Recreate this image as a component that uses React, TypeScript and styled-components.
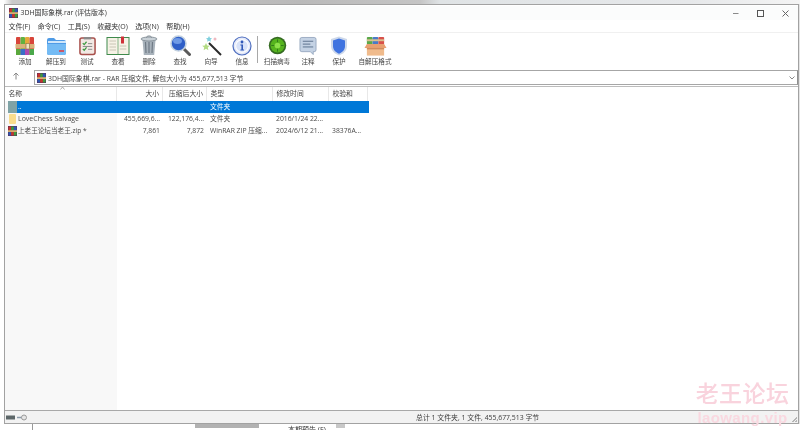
import React from "react";
import styled, { createGlobalStyle } from "styled-components";

const Global = createGlobalStyle`
  html, body { margin: 0; padding: 0; background: #fff; width: 800px; height: 430px; overflow: hidden; }
  body { font-family: "Open Sans", "Noto Sans CJK SC", sans-serif; color: #3a3a3a; }
  * { box-sizing: border-box; }
`;

const Page = styled.div`
  position: relative; width: 800px; height: 430px; display: flex; flex-direction: column;
  background: #fff; overflow: hidden;
`;
const TopStrip = styled.div`
  height: 4px; flex: none;
  background: linear-gradient(to right, #fdfdfd 0, #fdfdfd 4px, #c9c9c9 12px, #b9b9b9 300px, #c5c5c5 420px, #dfe3e5 440px, #e6e8ea 690px, #f4f4f4 800px);
`;
const Middle = styled.div`
  flex: 1; display: flex; padding: 0 1px 0 4px; background: linear-gradient(to right, #fff 796px, #e4e4e4 796px);
  min-height: 0;
`;
const Win = styled.div`
  flex: 1; display: flex; flex-direction: column; background: #fff; border: 1px solid #a2a2a2; min-width: 0;
  filter: blur(0.35px);
`;
const TitleBar = styled.div`
  height: 14px; flex: none; display: flex; align-items: center; padding-left: 4px; margin-top: 1px;
  background: #fbfcfc; font-size: 6.9px; gap: 2.5px; color: #333;
`;
const TitleText = styled.span` flex: 1; line-height: 14px; white-space: nowrap; `;
const Controls = styled.div` display: flex; margin-right: 0; `;
const Control = styled.div` width: 25px; height: 14px; display: flex; align-items: center; justify-content: center; `;
const MenuBar = styled.div`
  height: 13px; flex: none; display: flex; gap: 7.5px; padding-left: 3.5px; align-items: center; font-size: 7px; color: #333;
  border-bottom: 1px solid #f0f0f0;
`;
const MenuItem = styled.span` white-space: nowrap; line-height: 13px; `;
const Toolbar = styled.div`
  height: 34px; flex: none; display: flex; align-items: flex-start; padding-left: 4.5px;
`;
const ToolButton = styled.div<{ $wide?: boolean }>`
  width: ${(p) => (p.$wide ? "41px" : "31px")}; flex: none; display: flex; flex-direction: column; align-items: center;
  font-size: 6.6px; color: #444; white-space: nowrap; padding-top: 2px;
`;
const ToolLabel = styled.span` line-height: 9px; margin-top: 1px; `;
const ToolSep = styled.div` width: 1px; height: 27px; margin: 3px 3.5px 0 -0.5px; background: #a8a8a8; flex: none; `;
const AddressRow = styled.div`
  height: 20px; flex: none; display: flex; align-items: flex-end; padding-bottom: 1px; background: #fff; border-bottom: 1px solid #bcbcbc;
`;
const UpArrow = styled.div` width: 29px; height: 15px; display: flex; align-items: center; padding: 0 0 3px 7px; flex: none; `;
const AddressBox = styled.div`
  flex: 1; height: 15px; border: 1px solid #a6a6a6; border-right-color: #8f8f8f; display: flex; align-items: center; gap: 1px; padding: 0 2px;
  font-size: 6.9px; color: #444; white-space: nowrap;
`;
const AddressText = styled.span` flex: 1; margin-left: 1px; `;
const ListArea = styled.div`
  flex: 1; min-height: 0; display: flex; flex-direction: column;
  background: linear-gradient(to right, #f8f8f8 112.5px, #fff 112.5px);
`;
const COLS = "112px 46px 44px 66px 56px 39px";
const Header = styled.div`
  display: grid; grid-template-columns: ${COLS}; height: 14px; width: 363px; flex: none; font-size: 6.8px; color: #444;
  background: #fff; position: relative;
`;
const HeadCell = styled.div<{ $right?: boolean }>`
  line-height: 14px; border-right: 1px solid #e8e8e8; white-space: nowrap;
  padding: ${(p) => (p.$right ? "0 3px 0 0" : "0 0 0 3.5px")}; text-align: ${(p) => (p.$right ? "right" : "left")};
`;
const SortMark = styled.span`
  position: absolute; left: 55px; top: -1px; width: 5px; height: 4px; display: block; line-height: 0;
`;
const Row = styled.div<{ $selected?: boolean }>`
  display: grid; grid-template-columns: ${COLS}; height: 11.8px; width: 363.500px; font-size: 6.8px; flex: none;
  color: ${(p) => (p.$selected ? "#fff" : "#4a4a4a")};
  background: ${(p) => (p.$selected ? "linear-gradient(to right, transparent 12px, #0078d7 12px)" : "transparent")};
`;
const NameCell = styled.div` display: flex; align-items: center; gap: 1px; padding-left: 3px; white-space: nowrap; line-height: 12px; font-size: 7px; `;
const TightName = styled.span` font-size: 6.6px; `;
const Cell = styled.div<{ $right?: boolean }>`
  line-height: 12px; white-space: nowrap; overflow: hidden;
  padding: ${(p) => (p.$right ? "0 3px 0 0" : "0 0 0 3px")}; text-align: ${(p) => (p.$right ? "right" : "left")};
`;
const StatusBar = styled.div`
  height: 13px; flex: none; display: flex; align-items: center; background: #f2f2f2; border-top: 1px solid #a8a8a8;
  font-size: 6.9px; color: #3c3c3c; padding-left: 1px; position: relative;
`;
const StatusIcons = styled.div` width: 410px; display: flex; gap: 1px; align-items: center; flex: none; `;
const Grip = styled.div`
  position: absolute; right: 1px; bottom: 1px; width: 5px; height: 5px;
  background: linear-gradient(135deg, transparent 50%, #b5b5b5 50%, #b5b5b5 62%, transparent 62%, transparent 75%, #b5b5b5 75%);
`;
const BottomStrip = styled.div`
  height: 6px; flex: none; display: flex; font-size: 7px; color: #333; overflow: hidden; filter: blur(0.35px);
`;
const LeftPane = styled.div` width: 33px; flex: none; border-right: 1px solid #9a9a9a; `;
const Bump = styled.div` width: 64px; height: 4px; margin-left: 162px; background: #b2b2b2; flex: none; `;
const CutText = styled.span` margin-left: 29px; line-height: 12px; white-space: nowrap; `;
const Bump2 = styled.div` width: 9px; height: 4px; margin-left: 10px; background: #c8c8c8; flex: none; `;
const Watermark = styled.div`
  position: absolute; left: 695px; top: 380px; width: 95px; color: #f9d3dd; text-align: center; filter: blur(0.3px); pointer-events: none;
`;
const WmCn = styled.div` font-size: 23px; font-weight: 500; line-height: 27px; letter-spacing: 0.4px; white-space: nowrap; `;
const WmEn = styled.div` font-size: 15px; font-weight: 700; line-height: 14px; letter-spacing: 0.4px; margin-top: 4px; color: #f9d8e0; font-family: "Liberation Sans", sans-serif; white-space: nowrap; `;

const RarSmall = () => (
  <svg width="9" height="10" viewBox="0 0 10 10" preserveAspectRatio="none" style={{ flex: "none" }}>
    <rect x="0" y="0" width="10" height="10" fill="#5a2a5a" />
    <rect x="0.5" y="0.5" width="3" height="4" fill="#c8342c" />
    <rect x="3.5" y="0.5" width="3" height="4" fill="#3f9a3c" />
    <rect x="6.5" y="0.5" width="3" height="4" fill="#2d58b0" />
    <rect x="0.5" y="6" width="3" height="3.5" fill="#2d58b0" />
    <rect x="3.5" y="6" width="3" height="3.5" fill="#c8342c" />
    <rect x="6.5" y="6" width="3" height="3.5" fill="#3f9a3c" />
    <rect x="0" y="4.2" width="10" height="1.8" fill="#d8b070" />
  </svg>
);
const Books = () => (
  <svg width="20" height="20" viewBox="0 0 20 20">
    <rect x="1" y="1" width="4.5" height="18" rx="1" fill="#d8453a" />
    <rect x="5.5" y="1" width="4.5" height="18" rx="1" fill="#62b13f" />
    <rect x="10" y="1" width="4.5" height="18" rx="1" fill="#e4a83a" />
    <rect x="14.5" y="1" width="4.5" height="18" rx="1" fill="#d8453a" />
    <rect x="1" y="13" width="4.5" height="6" fill="#5aa83c" />
    <rect x="5.5" y="13" width="4.5" height="6" fill="#3a6fc8" />
    <rect x="10" y="13" width="4.5" height="6" fill="#b04ab0" />
    <rect x="14.5" y="13" width="4.5" height="6" fill="#4aa84a" />
    <rect x="0.5" y="8" width="19" height="4.5" fill="#d9b27a" />
    <rect x="11" y="7.5" width="3.5" height="5.5" fill="#f2e4c0" stroke="#8a6a3a" strokeWidth=".6" />
  </svg>
);
const FolderBlue = () => (
  <svg width="21" height="20" viewBox="0 0 21 20">
    <path d="M1 4a2 2 0 0 1 2-2h5l2 2h8a2 2 0 0 1 2 2v11a2 2 0 0 1-2 2H3a2 2 0 0 1-2-2z" fill="#4f9be6" />
    <path d="M1 8h19v9a2 2 0 0 1-2 2H3a2 2 0 0 1-2-2z" fill="#74bbf4" />
    <path d="M2 5h18v2H2z" fill="#cfe6fa" />
    <rect x="13" y="14" width="5" height="2" fill="#c9586a" />
  </svg>
);
const Test = () => (
  <svg width="17" height="20" viewBox="0 0 18 20">
    <rect x="1" y="1.5" width="16" height="17.5" rx="2" fill="#f2e9e4" stroke="#a8504c" strokeWidth="1.6" />
    <rect x="5" y="0.5" width="8" height="2.5" fill="#8a8a8a" />
    <path d="M4 7l1.5 1.5L8 5.5M4 13l1.5 1.5L8 11.5" fill="none" stroke="#3c9a40" strokeWidth="1.3" />
    <path d="M9.5 7.5h4.5M9.5 13.5h4.5M4 10.5h10" stroke="#888" strokeWidth="1" />
  </svg>
);
const BookOpen = () => (
  <svg width="24" height="20" viewBox="0 0 24 20">
    <rect x="0.5" y="1" width="23" height="18" fill="#3f8a4c" />
    <rect x="1.500" y="2" width="10.200" height="16" fill="#f6f2e6" />
    <rect x="12.300" y="2" width="10.200" height="16" fill="#f6f2e6" />
    <rect x="15" y="0.5" width="3" height="7" fill="#cf3038" />
    <path d="M3.500 5h6.500M3.500 8h6.500M3.500 11h6.500M3.500 14h6.500M13.800 10h6.500M13.800 13h6.500" stroke="#c4c0b0" strokeWidth=".9" />
  </svg>
);
const Trash = () => (
  <svg width="18" height="21" viewBox="0 0 18 21">
    <path d="M2.500 5h13l-1.300 15H3.800z" fill="#a8b2bb" />
    <path d="M5.500 7l.5 11M9 7v11M12.500 7l-.5 11" stroke="#6f7a85" strokeWidth="1.200" />
    <ellipse cx="9" cy="4" rx="8" ry="2" fill="#c8d0d6" stroke="#7a858e" strokeWidth=".8" />
    <path d="M6.500 2.500c0-2 5-2 5 0" fill="none" stroke="#7a858e" />
  </svg>
);
const Find = () => (
  <svg width="21" height="21" viewBox="0 0 21 21">
    <path d="M13 13l6.500 6.500" stroke="#5a5a5a" strokeWidth="3" strokeLinecap="round" />
    <circle cx="8.500" cy="8.500" r="7.500" fill="#2f5fc8" stroke="#c4d2e0" strokeWidth="1.600" />
    <ellipse cx="7.500" cy="6" rx="4.500" ry="3" fill="#6f9ae6" />
  </svg>
);
const Wizard = () => (
  <svg width="21" height="21" viewBox="0 0 21 21">
    <path d="M8 8l12 12" stroke="#2a2a2a" strokeWidth="2" />
    <path d="M5 8l1.200 2.500 2.600.3-2 1.800.6 2.600L5 13.800l-2.400 1.400.6-2.600-2-1.800 2.600-.3z" fill="#b4dc84" />
    <path d="M8 1l1 2 2 .3-1.500 1.400.4 2L8 5.800l-1.900.9.4-2L5 3.300 7 3z" fill="#7fd0de" />
    <circle cx="14" cy="4" r="1.500" fill="#eeb8c0" />
  </svg>
);
const Info = () => (
  <svg width="20" height="20" viewBox="0 0 20 20">
    <circle cx="10" cy="10" r="9" fill="#e4e9f8" stroke="#4f6fc0" strokeWidth="1.200" />
    <circle cx="10" cy="10" r="6.800" fill="#fff" />
    <circle cx="10" cy="10" r="5.800" fill="#d8e2f8" />
    <circle cx="10" cy="6" r="1.400" fill="#3058b8" />
    <path d="M8.400 8.500H11v5h1v1H8.400v-1h1v-4h-1z" fill="#3058b8" />
  </svg>
);
const Scan = () => (
  <svg width="19" height="19" viewBox="0 0 20 20">
    <circle cx="10" cy="10" r="9.200" fill="#356b22" />
    <circle cx="10" cy="10" r="7.400" fill="#56b41e" />
    <circle cx="10" cy="10" r="3" fill="#8ce04a" />
    <path d="M10 3.500v3M10 13.500v3M3.500 10h3M13.500 10h3" stroke="#2f7a1a" strokeWidth="1" />
  </svg>
);
const Note = () => (
  <svg width="18" height="20" viewBox="0 0 19 20">
    <path d="M3 1h13a2 2 0 0 1 2 2v11a2 2 0 0 1-2 2h-1v3l-3-3H3a2 2 0 0 1-2-2V3a2 2 0 0 1 2-2z" fill="#c4d2e4" stroke="#8a9cb6" strokeWidth=".8" />
    <path d="M4 5h11M4 8h8M4 11h11" stroke="#5a6f8c" strokeWidth="1" />
  </svg>
);
const Shield = () => (
  <svg width="18" height="20" viewBox="0 0 18 20">
    <path d="M9 0.500l8 2.500v7c0 5-4 8-8 9.500-4-1.500-8-4.500-8-9.500V3z" fill="#cdd8ea" />
    <path d="M9 2.500l6 2v5.500c0 4-3 6.500-6 7.800-3-1.300-6-3.800-6-7.800V4.500z" fill="#3f73e0" />
  </svg>
);
const Box = () => (
  <svg width="23" height="20" viewBox="0 0 24 20">
    <rect x="3" y="0.500" width="6" height="8" rx="1" fill="#5aa84a" />
    <rect x="9" y="0.500" width="6" height="8" rx="1" fill="#4a7ac8" />
    <rect x="15" y="0.500" width="6" height="8" rx="1" fill="#d8504a" />
    <rect x="3" y="3" width="18" height="2" fill="#d8c090" />
    <path d="M3 8h18l2.500 4H.5z" fill="#e8a070" />
    <rect x="3" y="12" width="18" height="8" fill="#f0bb8c" />
    <rect x="3" y="12" width="18" height="1.500" fill="#d08a5c" />
  </svg>
);

const tools: [string, React.ReactNode][] = [
  ["添加", <Books />], ["解压到", <FolderBlue />], ["测试", <Test />], ["查看", <BookOpen />],
  ["删除", <Trash />], ["查找", <Find />], ["向导", <Wizard />], ["信息", <Info />],
];
const tools2: [string, React.ReactNode][] = [
  ["扫描病毒", <Scan />], ["注释", <Note />], ["保护", <Shield />],
];

const IconBox = styled.div` height: 21px; display: flex; align-items: center; justify-content: center; `;

export default function App() {
  return (
    <Page>
      <Global />
      <TopStrip />
      <Middle>
        <Win>
          <TitleBar>
            <RarSmall />
            <TitleText>3DH国际象棋.rar (评估版本)</TitleText>
            <Controls>
              <Control><svg width="7" height="7" viewBox="0 0 7 7"><path d="M1 3.500h5.500" stroke="#8a8a8a" /></svg></Control>
              <Control><svg width="7" height="7" viewBox="0 0 7 7"><rect x=".5" y=".5" width="6" height="6" fill="none" stroke="#555" /></svg></Control>
              <Control><svg width="7" height="7" viewBox="0 0 7 7"><path d="M.5.5l6 6M6.500.5l-6 6" stroke="#666" /></svg></Control>
            </Controls>
          </TitleBar>
          <MenuBar>
            {["文件(F)", "命令(C)", "工具(S)", "收藏夹(O)", "选项(N)", "帮助(H)"].map((m) => <MenuItem key={m}>{m}</MenuItem>)}
          </MenuBar>
          <Toolbar>
            {tools.map(([label, icon]) => (
              <ToolButton key={label}><IconBox>{icon}</IconBox><ToolLabel>{label}</ToolLabel></ToolButton>
            ))}
            <ToolSep />
            {tools2.map(([label, icon]) => (
              <ToolButton key={label}><IconBox>{icon}</IconBox><ToolLabel>{label}</ToolLabel></ToolButton>
            ))}
            <ToolButton $wide><IconBox><Box /></IconBox><ToolLabel>自解压格式</ToolLabel></ToolButton>
          </Toolbar>
          <AddressRow>
            <UpArrow>
              <svg width="8" height="8" viewBox="0 0 8 8"><path d="M4 7.500V1M1.500 3.500L4 1l2.500 2.500" fill="none" stroke="#888" /></svg>
            </UpArrow>
            <AddressBox>
              <RarSmall />
              <AddressText>3DH国际象棋.rar - RAR 压缩文件, 解包大小为 455,677,513 字节</AddressText>
              <svg width="6" height="4" viewBox="0 0 6 4"><path d="M.5.5L3 3 5.500.5" fill="none" stroke="#888" /></svg>
            </AddressBox>
          </AddressRow>
          <ListArea>
            <Header>
              <HeadCell>名称</HeadCell>
              <HeadCell $right>大小</HeadCell>
              <HeadCell $right>压缩后大小</HeadCell>
              <HeadCell>类型</HeadCell>
              <HeadCell>修改时间</HeadCell>
              <HeadCell>校验和</HeadCell>
              <SortMark><svg width="5" height="4" viewBox="0 0 5 4" style={{ display: "block" }}><path d="M.5 3.500L2.500 1l2 2.500" fill="none" stroke="#aaa" /></svg></SortMark>
            </Header>
            <Row $selected>
              <NameCell>
                <svg width="9" height="12" viewBox="0 0 9 12" style={{ flex: "none" }}><rect width="9" height="12" fill="#7fa3a6" /></svg>
                <span>..</span>
              </NameCell>
              <Cell $right />
              <Cell $right />
              <Cell>文件夹</Cell>
              <Cell />
              <Cell />
            </Row>
            <Row>
              <NameCell>
                <svg width="9" height="10" viewBox="0 0 9 10" style={{ flex: "none" }}><rect x="1" width="7" height="10" rx="1" fill="#f9dc8c" /></svg>
                <span>LoveChess Salvage</span>
              </NameCell>
              <Cell $right>455,669,6...</Cell>
              <Cell $right>122,176,4...</Cell>
              <Cell>文件夹</Cell>
              <Cell>2016/1/24 22...</Cell>
              <Cell />
            </Row>
            <Row>
              <NameCell>
                <RarSmall />
                <TightName>上老王论坛当老王.zip *</TightName>
              </NameCell>
              <Cell $right>7,861</Cell>
              <Cell $right>7,872</Cell>
              <Cell>WinRAR ZIP 压缩...</Cell>
              <Cell>2024/6/12 21...</Cell>
              <Cell>38376A...</Cell>
            </Row>
          </ListArea>
          <StatusBar>
            <StatusIcons>
              <svg width="10" height="5" viewBox="0 0 10 5"><rect width="9" height="4" y=".5" fill="#5c6668" /></svg>
              <svg width="10" height="7" viewBox="0 0 10 7"><path d="M0 3.500h5" stroke="#8a9aa8" strokeWidth="1.500" /><circle cx="7" cy="3.500" r="2.500" fill="#e4e4e4" stroke="#9a9a9a" /></svg>
            </StatusIcons>
            <span>总计 1 文件夹, 1 文件, 455,677,513 字节</span>
            <Grip />
          </StatusBar>
        </Win>
      </Middle>
      <BottomStrip>
        <LeftPane />
        <Bump />
        <CutText>本期预告 (E)</CutText>
        <Bump2 />
      </BottomStrip>
      <Watermark>
        <WmCn>老王论坛</WmCn>
        <WmEn>laowang.vip</WmEn>
      </Watermark>
    </Page>
  );
}
